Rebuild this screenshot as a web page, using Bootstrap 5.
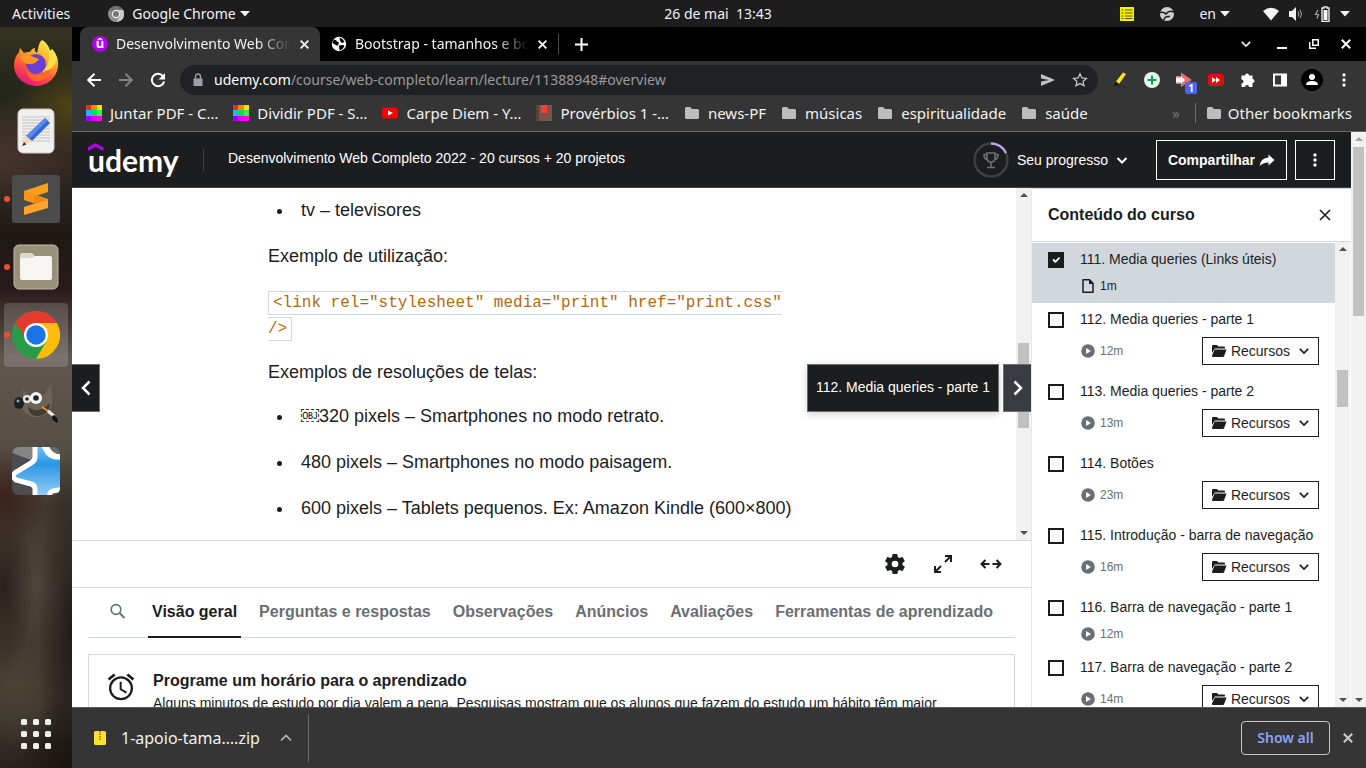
<!DOCTYPE html>
<html lang="pt-BR">
<head>
<meta charset="utf-8">
<meta name="viewport" content="width=device-width, initial-scale=1">
<title>Desenvolvimento Web Completo 2022</title>
<link rel="stylesheet" href="https://cdn.jsdelivr.net/npm/bootstrap@5.3.0/dist/css/bootstrap.min.css">
<script src="https://cdn.jsdelivr.net/npm/bootstrap@5.3.0/dist/js/bootstrap.bundle.min.js"></script>
<style>
  :root { --ink: #1c1d1f; --line: #d1d7dc; --mute: #6a6f73; --chrome: #353535; }
  body { font-family: "Liberation Sans", Arial, sans-serif; font-size: 14px; line-height: 20px; color: var(--ink); }
  .desktop-ui { font-family: "Noto Sans", sans-serif; font-size: 14px; line-height: 20px; color: #f2f2f2; }
  button { padding: 0; border: 0; background: none; color: inherit; }
  a { color: inherit; text-decoration: none; }
  svg { display: block; flex: none; }

  /* system bar */
  .system-bar { height: 27px; background: #1d1d1d; }
  .system-left { flex: 1 1 78px; }
  .system-right { flex: 1 1 0; }
  .app-menu { margin-left: 38px; }
  .wifi { margin-left: 32px; }

  /* dock */
  .dock { width: 72px; padding-top: 4px; gap: 4px;
    background:
      radial-gradient(60px 46px at 72px 80px, #5b4a14cc, transparent),
      radial-gradient(60px 60px at 10px 130px, #4a3530cc, transparent),
      radial-gradient(40px 50px at 6px 470px, #3b211bee, transparent),
      radial-gradient(34px 180px at 72px 600px, #1d1512dd, transparent),
      radial-gradient(30px 90px at 4px 560px, #241c17dd, transparent),
      radial-gradient(50px 60px at 16px 660px, #4a4433, transparent),
      radial-gradient(60px 70px at 72px 740px, #17120f, transparent),
      linear-gradient(#34331f 0, #23261a 60px, #352b24 130px, #1e1815 210px, #281a1b 260px, #5f564e 330px, #554c43 430px, #40382f 480px, #4c443a 560px, #413830 620px, #38312a 700px, #2a241f 741px); }
  .dock-item { width: 64px; height: 64px; border-radius: 4px; display: flex; align-items: center; justify-content: center; position: relative; }
  .dock-item.current { background: #ffffff2b; }
  .dock-item.running::before { content: ""; position: absolute; left: 0; width: 6px; height: 6px; border-radius: 50%; background: #e95420; }

  /* browser frame */
  .tab-strip { height: 34px; background: #000; padding-left: 8px; }
  .browser-tab { width: 240px; height: 34px; padding: 0 10px 0 12px; gap: 8px; }
  .browser-tab.open { background: var(--chrome); border-radius: 8px 8px 0 0; }
  .browser-tab.idle { width: 239px; padding-left: 11px; border-right: 1px solid #4a4a4a; height: 20px; }
  .tab-title { flex: 1 1 0; min-width: 0; overflow: hidden; white-space: nowrap; -webkit-mask-image: linear-gradient(90deg, #000 calc(100% - 34px), transparent); mask-image: linear-gradient(90deg, #000 calc(100% - 34px), transparent); }
  .favicon { width: 16px; height: 16px; border-radius: 50%; background: #b100f2; font: bold 13px/14px "Noto Sans", sans-serif; text-align: center; color: #fff; }
  .win-btn { width: 32px; height: 34px; display: flex; align-items: center; justify-content: center; }
  .tool-row { height: 38px; background: var(--chrome); padding: 0 6px; }
  .tool-btn { width: 32px; height: 32px; display: flex; align-items: center; justify-content: center; position: relative; }
  .address { flex: 1 1 0; height: 30px; border-radius: 15px; background: #202124; margin: 0 6px; padding: 0 10px 0 12px; color: #9a9a9a; }
  .address-text { margin-left: 10px; white-space: nowrap; }
  .ext-count { position: absolute; left: 17px; top: 18px; width: 12px; height: 12px; border-radius: 2px; background: #4966ee; color: #fff; font: bold 10px/12px "Noto Sans", sans-serif; text-align: center; }
  .bookmark-row { height: 33px; background: var(--chrome); border-bottom: 1px solid #6b6b66; padding: 0 14px 5px; gap: 15px; white-space: nowrap; font-size: 15px; }
  .bookmark { display: flex; align-items: center; gap: 8px; }
  .other-marks { border-left: 1px solid #6b6b66; padding-left: 10px; gap: 6px; }

  /* course header */
  .course-head { height: 56px; background: var(--ink); border-bottom: 1px solid #3e4143; color: #fff; padding: 0 16px; }
  .brand { position: relative; font: bold 30px/40px Lato, sans-serif; width: 92px; }
  .brand svg { position: absolute; left: 0; top: 3px; }
  .head-rule { width: 1px; height: 22px; background: #3e4143; margin: 0 24px 0 23px; }
  .head-btn { height: 40px; border: 1px solid #fff; font-weight: 700; display: flex; align-items: center; justify-content: center; }
  .share-btn { width: 131px; margin: 0 8px 0 28px; gap: 4px; }

  /* lecture */
  .lecture { flex: 1 1 0; min-height: 0; border-bottom: 1px solid var(--line); position: relative; }
  .article-text { width: 552px; max-width: 100%; padding-top: 8px; font-size: 18px; line-height: 28px; }
  .article-text p, .article-text ul { margin: 0 0 18px; }
  .article-text ul { padding-left: 26px; }
  .article-text li { padding-left: 7px; margin-bottom: 18px; }
  .article-text .code-line { line-height: 26px; }
  .article-text code { font: 16px "Liberation Mono", monospace; color: #b4690e; border: 1px solid var(--line); padding: 2px 4px; }
  .step { width: 28px; height: 48px; border: 1px solid var(--mute); background: var(--ink); color: #fff; display: flex; align-items: center; justify-content: center; }
  .step-prev { position: absolute; left: 0; top: 50%; border-left: 0; }
  .step-next { position: absolute; right: 0; top: 50%; gap: 4px; }
  .step-next .step { background: #3a3b40; border-right: 0; }
  .step-label { height: 48px; line-height: 44px; padding: 0 8px; background: var(--ink); color: #fff; border: 1px solid var(--mute); box-shadow: 0 2px 8px #0000002e; }
  .controls { height: 47px; border-bottom: 1px solid var(--line); padding-right: 28px; gap: 24px; }

  .lower { flex: 0 0 119px; overflow: hidden; padding: 0 16px; }
  .course-tabs { height: 50px; border-bottom: 1px solid var(--line); gap: 14px; padding-left: 20px; font-size: 16px; font-weight: 700; color: var(--mute); white-space: nowrap; }
  .course-tab { height: 50px; padding: 14px 4px 12px; line-height: 20px; }
  .course-tab.chosen { color: var(--ink); border-bottom: 2px solid var(--ink); }
  .search-btn { margin: 0 8px 4px 0; }
  .notice { border: 1px solid var(--line); margin-top: 16px; padding: 16px; gap: 16px; }
  .notice h2 { font-size: 16px; line-height: 20px; font-weight: 700; margin: 0 0 2px; }

  /* course contents */
  .contents { width: 320px; border-left: 1px solid #e6e9ec; }
  .contents-head { height: 54px; border-top: 1px solid var(--line); border-bottom: 1px solid var(--line); padding: 0 20px 0 16px; }
  .contents-head h2 { font-size: 16px; line-height: 20px; font-weight: 700; margin: 0; }
  .lesson-list { padding-top: 1px; }
  .lesson { padding: 6px 16px 5px; gap: 16px; }
  .lesson.with-files { padding-bottom: 10px; }
  .lesson.viewing { background: var(--line); }
  .lesson .form-check-input { width: 16px; height: 16px; margin: 3px 0 0; border: 2px solid var(--ink); border-radius: 0; flex: none; background-color: #fff; }
  .lesson .form-check-input:checked { background-color: var(--ink); background-size: 12px; }
  .lesson-meta { min-height: 24px; margin-top: 5px; font-size: 12px; color: var(--mute); }
  .with-files .lesson-meta { margin-top: 8px; }
  .viewing .lesson-meta { color: var(--ink); }
  .files-btn { width: 117px; height: 28px; border: 1px solid var(--ink); font-size: 14px; color: var(--ink); }

  /* scroll bars */
  .scroller { width: 15px; background: #f1f1f1; padding: 5px 2px; flex: none; }
  .contents .scroller { width: 16px; border-right: 1px solid #fff; }
  .scroller::before, .scroller::after { content: ""; align-self: center; border: 4px solid transparent; border-top-width: 0; border-bottom-color: #505050; }
  .scroller::after { border-top: 4px solid #505050; border-bottom-width: 0; margin-top: auto; }
  .scroller.at-top::before { border-bottom-color: #a3a3a3; }
  .scroll-grip { background: #c1c1c1; width: 11px; }
  .grip-lecture { margin-top: 146px; height: 85px; }
  .grip-contents { margin-top: 119px; height: 37px; }
  .grip-page { margin-top: 6px; height: 169px; }

  /* downloads */
  .downloads { height: 61px; background: var(--chrome); border-top: 1px solid #5a5a5a; padding: 0 12px 0 21px; }
  .download-file { width: 216px; height: 48px; border-right: 1px solid #6b6b6b; font-size: 16px; gap: 14px; }
  .show-all { width: 89px; height: 34px; border: 1px solid #c8c8c8; border-radius: 4px; color: #8ba3f5; font-weight: 600; }
</style>
</head>
<body class="vh-100 d-flex flex-column overflow-hidden">

<svg width="0" height="0" class="position-absolute" aria-hidden="true">
  <symbol id="folder" viewBox="0 0 16 16"><path d="M1 3.500A1.500 1.500 0 0 1 2.500 2H6l2 2h5.500A1.500 1.500 0 0 1 15 5.500v7a1.500 1.500 0 0 1-1.500 1.500h-11A1.500 1.500 0 0 1 1 12.500z" fill="#bdbdbd"/></symbol>
  <symbol id="rainbow" viewBox="0 0 16 16"><path fill="#ff2a00" d="M0 0h5v5H0z"/><path fill="#ff8c00" d="M5 0h6v5H5z"/><path fill="#ffe400" d="M11 0h5v5h-5z"/><path fill="#1fb6ff" d="M0 5h5v6H0z"/><path fill="#00e05a" d="M5 5h6v6H5z"/><path fill="#3cf03c" d="M11 5h5v6h-5z"/><path fill="#a000ff" d="M0 11h5v5H0z"/><path fill="#e000ff" d="M5 11h6v5H5z"/><path fill="#ff00f0" d="M11 11h5v5h-5z"/></symbol>
  <symbol id="cross" viewBox="0 0 10 10"><path d="M1.500 1.500l7 7M8.500 1.500l-7 7" stroke="currentColor" stroke-width="1.800" fill="none"/></symbol>
  <symbol id="down" viewBox="0 0 10 10"><path d="M1.500 3.200L5 6.700l3.500-3.500" stroke="currentColor" stroke-width="1.400" fill="none"/></symbol>
  <symbol id="tri" viewBox="0 0 10 6"><path d="M0 0h10L5 5.500z" fill="currentColor"/></symbol>
  <symbol id="dots" viewBox="0 0 4 16"><g fill="currentColor"><circle cx="2" cy="3" r="1.700"/><circle cx="2" cy="8" r="1.700"/><circle cx="2" cy="13" r="1.700"/></g></symbol>
  <symbol id="play" viewBox="0 0 14 14"><circle cx="7" cy="7" r="6.800" fill="#6a6f73"/><path d="M5 4l5 3-5 3z" fill="#fff"/></symbol>
  <symbol id="files" viewBox="0 0 16 14"><path d="M1 2q0-1 1-1h4l1.500 1.500H13q1 0 1 1V4.500H4L1 9z" fill="#1c1d1f"/><path d="M1.200 11L3.800 5.500H15.600L13 12.300q-.3.700-1 .7H2q-1 0-1-1z" fill="#1c1d1f"/></symbol>
</svg>

<header class="desktop-ui system-bar d-flex align-items-center flex-shrink-0 px-2">
  <div class="system-left d-flex align-items-center ps-1">
    <button type="button">Activities</button>
    <button type="button" class="app-menu d-flex align-items-center gap-1">
      <svg class="me-1" width="16" height="16" viewBox="0 0 16 16"><circle cx="8" cy="8" r="8" fill="#8e8e8e"/><path d="M8 4h7.200A8 8 0 0 1 8.500 16L12 10z" fill="#c9c9c9"/><path d="M1.200 4A8 8 0 0 1 15 4H8L4.500 7z" fill="#707070"/><circle cx="8" cy="8" r="4.200" fill="#eee"/><circle cx="8" cy="8" r="3" fill="#777"/></svg>
      Google Chrome
      <svg width="10" height="6"><use href="#tri"/></svg>
    </button>
  </div>
  <time datetime="13:43">26 de mai&nbsp; 13:43</time>
  <div class="system-right d-flex align-items-center justify-content-end pe-2">
    <svg width="16" height="16" viewBox="0 0 16 16"><path fill="#f4ee00" d="M1 1h14v14H1z"/><path d="M2.500 4h2M6 4h7.500M2.500 7h2M6 7h7.500M2.500 10h2M6 10h7.500M2.500 12.500h2M6 12.500h7.500" stroke="#5c5a10" stroke-width="1.200"/></svg>
    <svg class="ms-4" width="16" height="16" viewBox="0 0 16 16"><circle cx="8" cy="8" r="7" fill="#cfcfcf"/><path d="M1 6.500q4-1 6 1.500 3-4 8-2M5 14q0-4 6-3.500" stroke="#1d1d1d" stroke-width="1.500" fill="none"/></svg>
    <button type="button" class="d-flex align-items-center gap-1 ms-4">en <svg width="10" height="6"><use href="#tri"/></svg></button>
    <svg class="wifi" width="18" height="16" viewBox="0 0 18 16"><path d="M1 5Q9-1.500 17 5L9 14.500z" fill="#f4f4f4"/></svg>
    <svg class="ms-2" width="16" height="16" viewBox="0 0 16 16"><path d="M1 5h3l4-4v14l-4-4H1z" fill="#f4f4f4"/><path d="M10 5.500q2 2.500 0 5M12 4q3 4 0 8" stroke="#aaa" fill="none"/></svg>
    <svg class="ms-2" width="20" height="16" viewBox="0 0 20 16"><path d="M6 4L3.500 8.500h3l-1.500 4" stroke="#aaa" stroke-width="1.200" fill="none"/><path d="M10 2h2V.8h3V2h2v13.300h-7z" fill="none" stroke="#f4f4f4" stroke-width="1.300"/><path d="M11.500 4h4v10h-4z" fill="#f4f4f4"/></svg>
    <svg class="ms-2" width="10" height="6"><use href="#tri"/></svg>
  </div>
</header>

<div class="d-flex flex-grow-1 overflow-hidden">
  <nav class="dock d-flex flex-column align-items-center flex-shrink-0" aria-label="Dock">
    <button type="button" class="dock-item" aria-label="Firefox">
      <svg width="48" height="48" viewBox="0 0 48 48"><defs><linearGradient id="fx" x1=".8" y1="0" x2=".3" y2="1"><stop offset="0" stop-color="#fff44f"/><stop offset=".35" stop-color="#ffb02e"/><stop offset=".65" stop-color="#ff5a36"/><stop offset="1" stop-color="#e5127d"/></linearGradient></defs><path d="M30 1c5 4 7 7 8 11 1-1 2-1 2-2 4 5 7 10 6 17-1 12-11 20-22 20S2 38 2 27c0-7 2-10 5-14l1-4 4 5c2-1 4-1 6-1 1-2 3-4 5-4-1 2 0 4 2 5l1-4c1-4 1-6 4-9z" fill="url(#fx)"/><circle cx="24" cy="25" r="10" fill="#6b3fd0"/><path d="M8 18q6-4 11-1l8 3q-3 5-9 5-6 1-10-7z" fill="#ff9a1f"/><path d="M14 27q2 9 10 9 12 0 11-13 4 6 1 13-4 7-13 6-9-3-9-15z" fill="#ff6a2b"/><path d="M30 1q7 7 7 17-1 10-7 15 12-2 15-13-1-6-5-10l-2 2q-2-8-8-11z" fill="#ffe04a"/></svg>
    </button>
    <button type="button" class="dock-item" aria-label="Editor de texto">
      <svg width="48" height="48" viewBox="0 0 48 48"><rect x="6" y="2" width="36" height="44" rx="5" fill="#f0f0ee" stroke="#c9c9c6"/><path d="M10 10h28M10 13h28M10 16h28M10 19h28M10 22h28M10 25h28M10 28h28M10 31h28M10 34h28" stroke="#c4c4c2"/><path d="M33 11l5 5-18 18-6-5z" fill="#3465d8"/><path d="M33 11l2.500 2.500L17 32l-3-3z" fill="#5a8af0"/><path d="M14 29l6 5-9 5z" fill="#f4d6b4"/><path d="M12 35l2.500 2.500L10 39z" fill="#333"/></svg>
    </button>
    <button type="button" class="dock-item running" aria-label="Sublime Text">
      <svg width="48" height="48" viewBox="0 0 48 48"><rect width="48" height="48" rx="3" fill="#4b4b4b"/><path d="M36 8v9l-24 8v-9z" fill="#ff9f1c"/><path d="M12 16l24 8v9l-24-8z" fill="#f7941e"/><path d="M36 24v9l-24 7v-8z" fill="#ffa32b"/><path d="M22 21l14 4-14 4z" fill="#e07f10" opacity=".6"/></svg>
    </button>
    <button type="button" class="dock-item running" aria-label="Arquivos">
      <svg width="48" height="48" viewBox="0 0 48 48"><rect x="2" y="2" width="44" height="44" rx="5" fill="#989079" stroke="#c2bba6"/><path d="M8 12q0-2 2-2h9q2 0 3 2l1 2h15q2 0 2 2v8H8z" fill="#dcd8cc"/><path d="M8 15h13l2-2h15q2 0 2 2v20q0 2-2 2H10q-2 0-2-2z" fill="#f8f6f2"/></svg>
    </button>
    <button type="button" class="dock-item running current" aria-label="Google Chrome">
      <svg width="48" height="48" viewBox="0 0 48 48"><circle cx="24" cy="24" r="24" fill="#2b9a48"/><path d="M24 12h20.800A24 24 0 0 1 24 48l10.500-18z" fill="#fbbc0c"/><path d="M3.200 12A24 24 0 0 1 44.800 12H24q-8 1-11 7l1 8z" fill="#e33b2e"/><circle cx="24" cy="24" r="12" fill="#fff"/><circle cx="24" cy="24" r="9.700" fill="#1a73e8"/></svg>
    </button>
    <button type="button" class="dock-item" aria-label="GIMP">
      <svg width="48" height="48" viewBox="0 0 48 48"><path d="M11 10l6 7q8-3 15-1l7-11 1 15q1 16-13 18-15 1-17-11z" fill="#6b6353"/><path d="M16 28q10 8 22-4-2 14-14 13-7-1-8-9z" fill="#423c31"/><ellipse cx="7" cy="24" rx="5" ry="6" fill="#1b1f24"/><circle cx="6" cy="22" r="1.500" fill="#8aa"/><circle cx="15" cy="20" r="4" fill="#e8e8e8"/><circle cx="15" cy="20" r="1.800" fill="#222"/><circle cx="24" cy="19" r="6" fill="#f4f4f4"/><circle cx="24" cy="19" r="2.800" fill="#222"/><path d="M30 28l9 6" stroke="#ef8b33" stroke-width="2"/><path d="M36 32l6 5" stroke="#eee" stroke-width="3"/><path d="M41 36q5 2 5 8-6-2-6-6z" fill="#111"/></svg>
    </button>
    <button type="button" class="dock-item" aria-label="Anki">
      <svg width="48" height="48" viewBox="0 0 48 48"><defs><linearGradient id="bl" x1="0" y1="0" x2="0" y2="1"><stop offset="0" stop-color="#8fccf6"/><stop offset=".4" stop-color="#2b96e4"/><stop offset="1" stop-color="#9fd4fa"/></linearGradient><clipPath id="rr"><rect width="48" height="48" rx="7"/></clipPath></defs><g clip-path="url(#rr)"><path fill="#4c4c4e" d="M0 0h48v48H0z"/><path d="M0 6l22 8V0H0z" fill="#858586"/><path d="M23-6v16q0 4-4 6L6 24q-8 4-2 9l15 4q4 1 4 5v10h17q-5-6 1-8l12-2V10h-8q-5 0-9-4l-7-12z" fill="url(#bl)" stroke="#fff" stroke-width="5"/><path d="M34-4q3 15 18 13V-4z" fill="#6a6a6c" stroke="#fff" stroke-width="4"/></g></svg>
    </button>
    <button type="button" class="dock-item mt-auto" aria-label="Mostrar aplicativos">
      <svg class="mb-1" width="30" height="30" viewBox="0 0 30 30" fill="#f0f0ee"><rect width="6" height="6" rx="1.500"/><rect x="12" width="6" height="6" rx="1.500"/><rect x="24" width="6" height="6" rx="1.500"/><rect y="12" width="6" height="6" rx="1.500"/><rect x="12" y="12" width="6" height="6" rx="1.500"/><rect x="24" y="12" width="6" height="6" rx="1.500"/><rect y="24" width="6" height="6" rx="1.500"/><rect x="12" y="24" width="6" height="6" rx="1.500"/><rect x="24" y="24" width="6" height="6" rx="1.500"/></svg>
    </button>
  </nav>

  <div class="d-flex flex-column flex-grow-1 overflow-hidden bg-white">
    <div class="desktop-ui flex-shrink-0">
      <div class="tab-strip d-flex align-items-center">
        <div class="browser-tab open d-flex align-items-center">
          <span class="favicon">û</span>
          <span class="tab-title">Desenvolvimento Web Completo</span>
          <button type="button" aria-label="Fechar aba"><svg width="11" height="11"><use href="#cross"/></svg></button>
        </div>
        <div class="browser-tab idle d-flex align-items-center">
          <svg width="16" height="16" viewBox="0 0 16 16"><circle cx="8" cy="8" r="7.200" fill="#fff"/><path d="M3 3.500q2 0 3 2l2 1-1 3H5.500L3 8 1.500 7q0-2 1.500-3.500zM8.500 1.500l3 1.500 2 3-2.500 1-2-2zM8 9.500l4-.5 1.500 1-2 3-3 1.500z" fill="#000"/></svg>
          <span class="tab-title">Bootstrap - tamanhos e bordas</span>
          <button type="button" aria-label="Fechar aba"><svg width="11" height="11"><use href="#cross"/></svg></button>
        </div>
        <button type="button" class="ms-3" aria-label="Nova aba"><svg width="13" height="13" viewBox="0 0 13 13"><path d="M6.500 0v13M0 6.500h13" stroke="#fff" stroke-width="2"/></svg></button>
        <div class="d-flex ms-auto pe-1">
          <button type="button" class="win-btn me-1" aria-label="Buscar abas"><svg width="12" height="12"><use href="#down"/></svg></button>
          <button type="button" class="win-btn" aria-label="Minimizar"><svg width="10" height="10" viewBox="0 0 10 10"><path d="M0 9h10" stroke="#fff" stroke-width="2"/></svg></button>
          <button type="button" class="win-btn" aria-label="Restaurar"><svg width="10" height="10" viewBox="0 0 10 10"><path d="M3.800.8h5.400v5.400H3.800zM.7 3v6.300H7" stroke="#fff" stroke-width="1.500" fill="none"/></svg></button>
          <button type="button" class="win-btn" aria-label="Fechar janela"><svg width="12" height="12"><use href="#cross"/></svg></button>
        </div>
      </div>

      <div class="tool-row d-flex align-items-center">
        <button type="button" class="tool-btn" aria-label="Voltar"><svg width="16" height="16" viewBox="0 0 16 16"><path d="M15 8H2.500M8.500 1.800L2.200 8l6.300 6.200" stroke="#fff" stroke-width="2" fill="none"/></svg></button>
        <button type="button" class="tool-btn" aria-label="Avançar"><svg width="16" height="16" viewBox="0 0 16 16"><path d="M1 8h12.500M7.500 1.800L13.800 8l-6.300 6.200" stroke="#848484" stroke-width="2" fill="none"/></svg></button>
        <button type="button" class="tool-btn" aria-label="Recarregar"><svg width="16" height="16" viewBox="0 0 16 16"><path d="M13.200 4.500A6.200 6.200 0 1 0 14.100 9.500" stroke="#fff" stroke-width="2" fill="none"/><path d="M15 1v6.500H8.500z" fill="#fff"/></svg></button>
        <div class="address d-flex align-items-center">
          <svg width="12" height="14" viewBox="0 0 12 14"><path d="M1.500 5.500h9v7.500h-9z" fill="#9aa0a6"/><path d="M3.500 6V3.500a2.500 2.500 0 0 1 5 0V6" stroke="#9aa0a6" stroke-width="1.400" fill="none"/></svg>
          <span class="address-text"><span class="text-white">udemy.com</span>/course/web-completo/learn/lecture/11388948#overview</span>
          <svg class="ms-auto" width="16" height="16" viewBox="0 0 16 16"><path d="M1 2l14 6-14 6V9.500L9 8 1 6.500z" fill="#bfc1c4"/></svg>
          <svg class="ms-3" width="16" height="16" viewBox="0 0 16 16"><path d="M8 1.800l1.900 4.100 4.500.5-3.400 3 1 4.400L8 11.600l-4 2.200 1-4.400-3.400-3 4.500-.5z" stroke="#c4c4c4" stroke-width="1.300" fill="none"/></svg>
        </div>
        <button type="button" class="tool-btn" aria-label="Marca-texto"><svg width="16" height="16" viewBox="0 0 16 16"><path d="M11 .5l3 1.500L7 12l-3-2.500z" fill="#ffe81a"/><path d="M4 9.500L7 12l-3 1.500-2.500 1.500z" fill="#161616"/><path d="M5 14.500h8" stroke="#2a2a2a" stroke-width="1.500"/></svg></button>
        <button type="button" class="tool-btn" aria-label="Adicionar"><svg width="16" height="16" viewBox="0 0 16 16"><circle cx="8" cy="8" r="8" fill="#e2f5e6"/><path d="M8 3.500v9M3.500 8h9" stroke="#12a05c" stroke-width="2"/></svg></button>
        <button type="button" class="tool-btn" aria-label="Velocidade do vídeo"><svg width="16" height="16" viewBox="0 0 16 16"><path d="M0 4h5V.5L16 8 5 15v-3H0z" fill="#f06a72"/><path d="M0 5.500h5V4l4 4-4 4v-1.500H0z" fill="#fff"/></svg><span class="ext-count">1</span></button>
        <button type="button" class="tool-btn" aria-label="Pular anúncios"><svg width="16" height="16" viewBox="0 0 16 16"><rect y="2" width="16" height="12" rx="3" fill="#e40b0b"/><path d="M4 5l4 3-4 3zM8 5l4 3-4 3z" fill="#fff"/></svg></button>
        <button type="button" class="tool-btn" aria-label="Extensões"><svg width="16" height="16" viewBox="0 0 16 16"><path d="M1.500 3.500H5a2 2 0 1 1 4 0h3.500V7a2 2 0 1 1 0 4v4H9a2 2 0 0 0-4 0H1.500v-3.500a2 2 0 0 0 0-4z" fill="#fff"/></svg></button>
        <button type="button" class="tool-btn" aria-label="Painel lateral"><svg width="16" height="16" viewBox="0 0 16 16"><path d="M2 2.500h12v11H2z" stroke="#fff" stroke-width="2" fill="none"/><path d="M9 2h5v12H9z" fill="#fff"/></svg></button>
        <button type="button" class="tool-btn" aria-label="Perfil"><svg width="22" height="22" viewBox="0 0 22 22"><circle cx="11" cy="11" r="11" fill="#000"/><circle cx="11" cy="8" r="3" fill="#fff"/><path d="M5 16q0-4 6-4t6 4z" fill="#fff"/></svg></button>
        <button type="button" class="tool-btn" aria-label="Menu"><svg width="4" height="16"><use href="#dots"/></svg></button>
      </div>

      <nav class="bookmark-row d-flex align-items-center" aria-label="Favoritos">
        <a class="bookmark" href="#"><svg width="16" height="16"><use href="#rainbow"/></svg>Juntar PDF - C…</a>
        <a class="bookmark" href="#"><svg width="16" height="16"><use href="#rainbow"/></svg>Dividir PDF - S…</a>
        <a class="bookmark" href="#"><svg width="16" height="16" viewBox="0 0 16 16"><rect y="2.500" width="16" height="11" rx="2.500" fill="#f00"/><path d="M6 5.500l5 2.500-5 2.500z" fill="#fff"/></svg>Carpe Diem - Y…</a>
        <a class="bookmark" href="#"><svg width="16" height="16" viewBox="0 0 16 16"><path fill="#795548" d="M0 0h16v16H0z"/><path fill="#5d4037" d="M0 0h3v16H0z"/><path fill="#ff3b3b" d="M5 0h6v8H5z"/></svg>Provérbios 1 -…</a>
        <a class="bookmark" href="#"><svg width="16" height="16"><use href="#folder"/></svg>news-PF</a>
        <a class="bookmark" href="#"><svg width="16" height="16"><use href="#folder"/></svg>músicas</a>
        <a class="bookmark" href="#"><svg width="16" height="16"><use href="#folder"/></svg>espiritualidade</a>
        <a class="bookmark" href="#"><svg width="16" height="16"><use href="#folder"/></svg>saúde</a>
        <button type="button" class="ms-auto text-secondary" aria-label="Mais favoritos">»</button>
        <a class="bookmark other-marks" href="#"><svg width="16" height="16"><use href="#folder"/></svg>Other bookmarks</a>
      </nav>
    </div>

    <div class="d-flex flex-grow-1 overflow-hidden">
      <div class="d-flex flex-column flex-grow-1 overflow-hidden">
        <header class="course-head d-flex align-items-center flex-shrink-0">
          <a class="brand" href="#"><svg width="15" height="8" viewBox="0 0 15 8"><path d="M0 4.200L7.500 0 15 4.200V8L7.500 3.800 0 8z" fill="#b100f2"/></svg>udemy</a>
          <span class="head-rule"></span>
          <a href="#" class="pb-1">Desenvolvimento Web Completo 2022 - 20 cursos + 20 projetos</a>
          <button type="button" class="d-flex align-items-center ms-auto gap-2">
            <svg width="36" height="36" viewBox="0 0 36 36"><circle cx="18" cy="18" r="16.500" fill="none" stroke="#3e4143" stroke-width="2.400"/><path d="M18 1.500A16.500 16.500 0 0 1 33 11" fill="none" stroke="#c0a4f0" stroke-width="2.400"/><path d="M14 11h8v5q0 4-4 4t-4-4zM14 12.500h-3q0 5 4 5M22 12.500h3q0 5-4 5M18 20v5M14 25.500h8" fill="none" stroke="#6a6f73" stroke-width="1.700"/></svg>
            Seu progresso
            <svg width="12" height="12" viewBox="0 0 12 12"><path d="M1.500 4L6 8.500 10.500 4" stroke="#fff" stroke-width="2" fill="none"/></svg>
          </button>
          <button type="button" class="head-btn share-btn">Compartilhar<svg width="16" height="16" viewBox="0 0 16 16"><path d="M9.500 2.500L15.500 8l-6 5.500v-3Q4 10.500.5 14 1.500 6 9.500 5.500z" fill="#fff"/></svg></button>
          <button type="button" class="head-btn px-3" aria-label="Mais opções"><svg width="6" height="16" viewBox="0 0 6 16"><g fill="#fff"><circle cx="3" cy="3" r="1.700"/><circle cx="3" cy="8" r="1.700"/><circle cx="3" cy="13" r="1.700"/></g></svg></button>
        </header>

        <div class="d-flex flex-grow-1 overflow-hidden">
          <main class="d-flex flex-column flex-grow-1 overflow-hidden">
            <section class="lecture d-flex">
              <div class="flex-grow-1 overflow-hidden">
                <article class="article-text mx-auto">
                  <ul><li class="mb-0">tv – televisores</li></ul>
                  <p>Exemplo de utilização:</p>
                  <p class="code-line"><code>&lt;link rel="stylesheet" media="print" href="print.css"<br>/&gt;</code></p>
                  <p class="mb-3">Exemplos de resoluções de telas:</p>
                  <ul>
                    <li>&#xFFFC;320 pixels – Smartphones no modo retrato.</li>
                    <li>480 pixels – Smartphones no modo paisagem.</li>
                    <li>600 pixels – Tablets pequenos. Ex: Amazon Kindle (600×800)</li>
                  </ul>
                </article>
              </div>
              <div class="scroller d-flex flex-column"><div class="scroll-grip grip-lecture"></div></div>
              <button type="button" class="step step-prev" aria-label="Aula anterior"><svg width="12" height="16" viewBox="0 0 12 16"><path d="M9.500 1.500L3 8l6.500 6.500" stroke="#fff" stroke-width="2.500" fill="none"/></svg></button>
              <div class="step-next d-flex">
                <span class="step-label" role="tooltip">112. Media queries - parte 1</span>
                <button type="button" class="step" aria-label="Próxima aula"><svg width="12" height="16" viewBox="0 0 12 16"><path d="M2.500 1.500L9 8l-6.500 6.500" stroke="#fff" stroke-width="2.500" fill="none"/></svg></button>
              </div>
            </section>

            <div class="controls d-flex align-items-center justify-content-end flex-shrink-0">
              <button type="button" aria-label="Configurações"><svg width="24" height="24" viewBox="0 0 24 24"><path d="M19.400 13c0-.3.100-.6.100-1s0-.7-.1-1l2.100-1.600c.2-.2.200-.4.100-.6l-2-3.500c-.1-.2-.4-.3-.6-.2l-2.500 1c-.5-.4-1.100-.7-1.700-1l-.4-2.600c0-.2-.2-.4-.5-.4h-4c-.2 0-.5.200-.5.400L9 5.100c-.6.300-1.200.6-1.700 1l-2.500-1c-.2-.1-.5 0-.6.200l-2 3.500c-.1.200-.1.500.1.600L4.500 11c0 .3-.1.700-.1 1s0 .7.100 1l-2.100 1.600c-.2.200-.2.400-.1.600l2 3.500c.1.200.4.300.6.200l2.500-1c.5.400 1.100.7 1.700 1l.4 2.600c0 .2.200.4.500.4h4c.2 0 .5-.2.500-.4l.4-2.600c.6-.3 1.200-.6 1.700-1l2.500 1c.2.100.5 0 .6-.2l2-3.500c.1-.2.100-.5-.1-.6zM12 15.300a3.300 3.300 0 1 1 0-6.600 3.300 3.300 0 0 1 0 6.600z" fill="#1c1d1f"/></svg></button>
              <button type="button" aria-label="Tela cheia"><svg width="24" height="24" viewBox="0 0 24 24"><path d="M14 4h6v6M19.500 4.500L14 10M4 14v6h6M4.500 19.500L10 14" stroke="#1c1d1f" stroke-width="2" fill="none"/></svg></button>
              <button type="button" aria-label="Visualização expandida"><svg width="24" height="24" viewBox="0 0 24 24"><path d="M10.500 12H3M6.500 8l-4 4 4 4M13.500 12H21M17.500 8l4 4-4 4" stroke="#1c1d1f" stroke-width="2" fill="none"/></svg></button>
            </div>

            <section class="lower">
              <nav class="course-tabs d-flex" aria-label="Seções do curso">
                <button type="button" class="search-btn" aria-label="Pesquisar"><svg width="18" height="18" viewBox="0 0 18 18"><circle cx="8" cy="7.500" r="4.800" stroke="#6a6f73" stroke-width="1.700" fill="none"/><path d="M11.500 11l5 5" stroke="#6a6f73" stroke-width="1.900"/></svg></button>
                <a class="course-tab chosen" href="#">Visão geral</a>
                <a class="course-tab" href="#">Perguntas e respostas</a>
                <a class="course-tab" href="#">Observações</a>
                <a class="course-tab" href="#">Anúncios</a>
                <a class="course-tab" href="#">Avaliações</a>
                <a class="course-tab" href="#">Ferramentas de aprendizado</a>
              </nav>
              <div class="notice d-flex">
                <svg width="32" height="32" viewBox="0 0 24 24"><path d="M22 5.700l-4.600-3.900-1.300 1.500 4.600 3.900zM7.900 3.400L6.600 1.900 2 5.700l1.300 1.500zM12.500 8H11v6l4.700 2.900.8-1.300-4-2.300zM12 4a9 9 0 1 0 0 18 9 9 0 0 0 0-18zm0 16.300a7.300 7.300 0 1 1 0-14.600 7.300 7.300 0 0 1 0 14.600z" fill="#1c1d1f"/></svg>
                <div>
                  <h2>Programe um horário para o aprendizado</h2>
                  <div>Alguns minutos de estudo por dia valem a pena. Pesquisas mostram que os alunos que fazem do estudo um hábito têm maior</div>
                </div>
              </div>
            </section>
          </main>

          <aside class="contents d-flex flex-column flex-shrink-0 overflow-hidden">
            <div class="contents-head d-flex align-items-center justify-content-between flex-shrink-0">
              <h2>Conteúdo do curso</h2>
              <button type="button" aria-label="Fechar"><svg width="12" height="12" viewBox="0 0 12 12"><path d="M1 1l10 10M11 1L1 11" stroke="#1c1d1f" stroke-width="1.600"/></svg></button>
            </div>
            <div class="d-flex flex-grow-1 overflow-hidden">
              <div class="lesson-list flex-grow-1 overflow-hidden">
                <div class="lesson viewing d-flex">
                  <input class="form-check-input" type="checkbox" id="l111" checked>
                  <div class="flex-grow-1">
                    <label for="l111">111. Media queries (Links úteis)</label>
                    <div class="lesson-meta d-flex align-items-center"><svg class="me-1" width="16" height="16" viewBox="0 0 16 16"><path d="M3 1.700h6.500L13 5.200v9.100H3z" stroke="#1c1d1f" stroke-width="1.500" stroke-linejoin="round" fill="none"/><path d="M9 1.500V6h4.500z" fill="#1c1d1f"/></svg>1m</div>
                  </div>
                </div>
                <div class="lesson with-files d-flex">
                  <input class="form-check-input" type="checkbox" id="l112">
                  <div class="flex-grow-1">
                    <label for="l112">112. Media queries - parte 1</label>
                    <div class="lesson-meta d-flex align-items-center"><svg class="me-1" width="16" height="14"><use href="#play"/></svg>12m<button type="button" class="files-btn d-flex align-items-center justify-content-center gap-1 ms-auto"><svg width="16" height="14"><use href="#files"/></svg>Recursos<svg class="ms-1" width="12" height="12"><use href="#down"/></svg></button></div>
                  </div>
                </div>
                <div class="lesson with-files d-flex">
                  <input class="form-check-input" type="checkbox" id="l113">
                  <div class="flex-grow-1">
                    <label for="l113">113. Media queries - parte 2</label>
                    <div class="lesson-meta d-flex align-items-center"><svg class="me-1" width="16" height="14"><use href="#play"/></svg>13m<button type="button" class="files-btn d-flex align-items-center justify-content-center gap-1 ms-auto"><svg width="16" height="14"><use href="#files"/></svg>Recursos<svg class="ms-1" width="12" height="12"><use href="#down"/></svg></button></div>
                  </div>
                </div>
                <div class="lesson with-files d-flex">
                  <input class="form-check-input" type="checkbox" id="l114">
                  <div class="flex-grow-1">
                    <label for="l114">114. Botões</label>
                    <div class="lesson-meta d-flex align-items-center"><svg class="me-1" width="16" height="14"><use href="#play"/></svg>23m<button type="button" class="files-btn d-flex align-items-center justify-content-center gap-1 ms-auto"><svg width="16" height="14"><use href="#files"/></svg>Recursos<svg class="ms-1" width="12" height="12"><use href="#down"/></svg></button></div>
                  </div>
                </div>
                <div class="lesson with-files d-flex">
                  <input class="form-check-input" type="checkbox" id="l115">
                  <div class="flex-grow-1">
                    <label for="l115">115. Introdução - barra de navegação</label>
                    <div class="lesson-meta d-flex align-items-center"><svg class="me-1" width="16" height="14"><use href="#play"/></svg>16m<button type="button" class="files-btn d-flex align-items-center justify-content-center gap-1 ms-auto"><svg width="16" height="14"><use href="#files"/></svg>Recursos<svg class="ms-1" width="12" height="12"><use href="#down"/></svg></button></div>
                  </div>
                </div>
                <div class="lesson d-flex">
                  <input class="form-check-input" type="checkbox" id="l116">
                  <div class="flex-grow-1">
                    <label for="l116">116. Barra de navegação - parte 1</label>
                    <div class="lesson-meta d-flex align-items-center"><svg class="me-1" width="16" height="14"><use href="#play"/></svg>12m</div>
                  </div>
                </div>
                <div class="lesson with-files d-flex">
                  <input class="form-check-input" type="checkbox" id="l117">
                  <div class="flex-grow-1">
                    <label for="l117">117. Barra de navegação - parte 2</label>
                    <div class="lesson-meta d-flex align-items-center"><svg class="me-1" width="16" height="14"><use href="#play"/></svg>14m<button type="button" class="files-btn d-flex align-items-center justify-content-center gap-1 ms-auto"><svg width="16" height="14"><use href="#files"/></svg>Recursos<svg class="ms-1" width="12" height="12"><use href="#down"/></svg></button></div>
                  </div>
                </div>
              </div>
              <div class="scroller d-flex flex-column"><div class="scroll-grip grip-contents"></div></div>
            </div>
          </aside>
        </div>
      </div>
      <div class="scroller at-top d-flex flex-column"><div class="scroll-grip grip-page"></div></div>
    </div>

    <footer class="desktop-ui downloads d-flex align-items-center flex-shrink-0">
      <div class="download-file d-flex align-items-center">
        <svg width="14" height="16" viewBox="0 0 14 16"><rect x="1" y="1" width="12" height="14" rx="1.500" fill="#ffe12e"/><path d="M7 1v10" stroke="#8a6d00" stroke-width="1.500" stroke-dasharray="1.500 1"/></svg>
        <a href="#">1-apoio-tama….zip</a>
        <button type="button" class="ms-auto me-3" aria-label="Opções do download"><svg width="12" height="10" viewBox="0 0 12 10"><path d="M1 7.500L6 2.500l5 5" stroke="#bbb" stroke-width="1.700" fill="none"/></svg></button>
      </div>
      <button type="button" class="show-all ms-auto">Show all</button>
      <button type="button" class="ms-2 ps-1" aria-label="Fechar downloads"><svg width="12" height="12" color="#c8c8c8"><use href="#cross"/></svg></button>
    </footer>
  </div>
</div>
</body>
</html>
